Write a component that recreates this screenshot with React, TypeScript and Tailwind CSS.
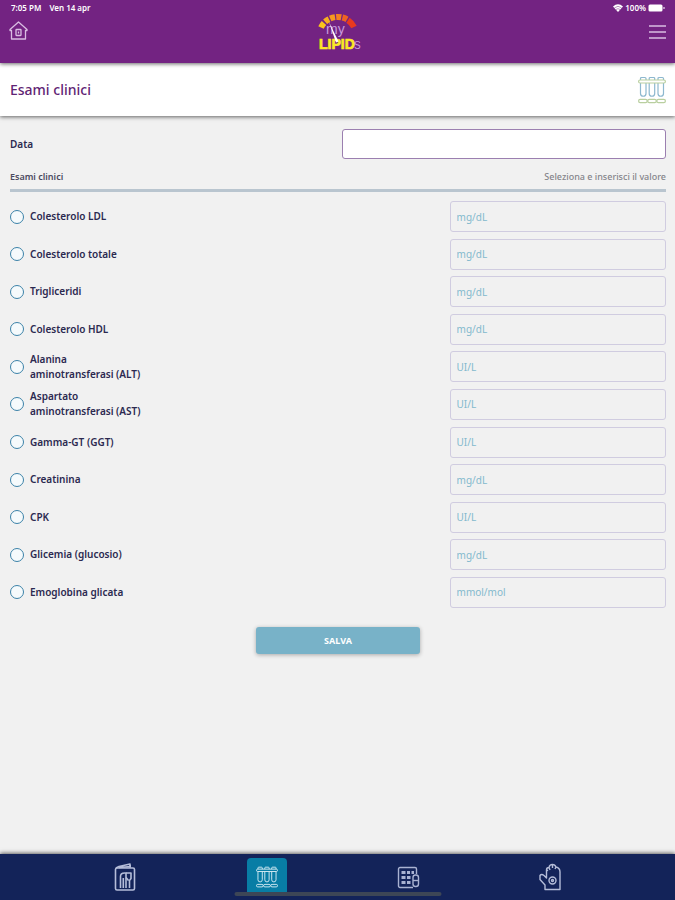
import type { ReactNode } from "react";

const exams = [
    { id: "ldl", label: "Colesterolo LDL", unit: "mg/dL" },
    { id: "totale", label: "Colesterolo totale", unit: "mg/dL" },
    { id: "trigliceridi", label: "Trigliceridi", unit: "mg/dL" },
    { id: "hdl", label: "Colesterolo HDL", unit: "mg/dL" },
    { id: "alt", label: "Alanina aminotransferasi (ALT)", unit: "UI/L" },
    { id: "ast", label: "Aspartato aminotransferasi (AST)", unit: "UI/L" },
    { id: "ggt", label: "Gamma-GT (GGT)", unit: "UI/L" },
    { id: "creatinina", label: "Creatinina", unit: "mg/dL" },
    { id: "cpk", label: "CPK", unit: "UI/L" },
    { id: "glicemia", label: "Glicemia (glucosio)", unit: "mg/dL" },
    { id: "emoglobina", label: "Emoglobina glicata", unit: "mmol/mol" },
];

function Logo() {
    return (
        <svg width="46" height="42" viewBox="0 0 46 42" role="img" aria-label="my LIPIDS">
            <g fill="none" strokeWidth="6">
                <path d="M6 15.500A18 18 0 0 1 9 11" stroke="#f9c51c" />
                <path d="M10.100 9.800A18 18 0 0 1 14 7.200" stroke="#f7b01f" />
                <path d="M15.200 6.500A18 18 0 0 1 20 5.100" stroke="#f59a1f" />
                <path d="M21.200 5A18 18 0 0 1 26.200 5.200" stroke="#f3801f" />
                <path d="M27.400 5.500A18 18 0 0 1 32 7.300" stroke="#ef6320" />
                <path d="M33 8.200A18 18 0 0 1 39 15" stroke="#e8391f" />
            </g>
            <text x="11" y="22" fontSize="14" fill="#c79bdc" fontFamily="Liberation Sans, sans-serif">my</text>
            <text x="4" y="37" fontSize="14" fontWeight="700" fill="#fbe926" stroke="#fbe926" strokeWidth="0.700" fontFamily="Liberation Sans, sans-serif">LIPID</text>
            <text x="39" y="37" fontSize="10" fill="#c79bdc" fontFamily="Liberation Sans, sans-serif">S</text>
            <path d="M14 10 23.500 29.500 21 30.500Z" fill="#fff" />
        </svg>
    );
}

function HomeIcon() {
    return (
        <svg width="19" height="20" viewBox="0 0 19 20" fill="none" stroke="#d9bde2" strokeWidth="1.300" strokeLinejoin="round">
            <path d="M1 8.500 9.500 1 18 8.500V9.500H16.500V18H2.500V9.500H1Z" />
            <rect x="7" y="8.500" width="5" height="6" rx="0.500" />
            <path d="M9.500 10.500V12.500" />
        </svg>
    );
}

function TubesIcon({ size, tube, rack }: { size: number; tube: string; rack: string }) {
    return (
        <svg width={size} height={size} viewBox="0 0 28 28" fill="none" strokeWidth="1.200">
            <g stroke={tube}>
                <path d="M2.500 4V2.500A1 1 0 0 1 3.500 1.500H7A1 1 0 0 1 8 2.500V4M2.500 7V17.500A2.700 2.700 0 0 0 8 17.500V7" />
                <path d="M11.200 4V2.500A1 1 0 0 1 12.200 1.500H15.700A1 1 0 0 1 16.700 2.500V4M11.200 7V17.500A2.700 2.700 0 0 0 16.700 17.500V7" />
                <path d="M20 4V2.500A1 1 0 0 1 21 1.500H24.500A1 1 0 0 1 25.500 2.500V4M20 7V17.500A2.700 2.700 0 0 0 25.500 17.500V7" />
            </g>
            <g stroke={rack}>
                <rect x="0.600" y="4" width="26.800" height="3" rx="1.500" />
                <rect x="0.600" y="23.400" width="8.600" height="3.200" rx="1.600" />
                <rect x="9.700" y="23.400" width="8.600" height="3.200" rx="1.600" />
                <rect x="18.800" y="23.400" width="8.600" height="3.200" rx="1.600" />
            </g>
        </svg>
    );
}

function BookletIcon() {
    return (
        <svg width="22" height="28" viewBox="0 0 22 28" fill="none" stroke="#b5bdd9" strokeWidth="1.600" strokeLinejoin="round">
            <rect x="1.500" y="5" width="19" height="22" rx="1.500" />
            <path d="M2 5 5 3.500 16 1V5M5 4.500 17 3.500" />
            <path d="M6.500 25V13.500Q6.500 10 10.500 10H12V25M9.300 25V15" />
            <path d="M12 10H17V15.500L15.500 17.500V25M12 14.500 14.500 17.500" />
        </svg>
    );
}

function PillsIcon() {
    return (
        <svg width="23" height="23" viewBox="0 0 23 23" fill="none" stroke="#a9b2d2" strokeWidth="1.400">
            <path d="M16 21.500H3A1.500 1.500 0 0 1 1.500 20V3A1.500 1.500 0 0 1 3 1.500H18A1.500 1.500 0 0 1 19.500 3V8" />
            <path d="M4.500 6.500H8.500M10 6.500H13M14.500 6.500H17M4.500 11.500H8.500M10 11.500H13.500M4.500 16.500H8.500M10 16.500H13.500" strokeWidth="2.800" />
            <rect x="16" y="9" width="5.500" height="11.500" rx="2.500" />
            <path d="M16 14.500H21.500" />
        </svg>
    );
}

function GloveIcon() {
    return (
        <svg width="24" height="28" viewBox="0 0 24 28" fill="none" stroke="#b5bdd9" strokeWidth="1.400" strokeLinejoin="round">
            <path d="M7 26.500V22L2 16.500V12.500Q3.500 10.500 6 12.500L8.500 15V7Q8.500 4.500 11 4.500Q11.500 1.500 14.500 1.500Q17 1.500 18 4Q22 5 22 9V26.500Z" />
            <path d="M8.500 8 10 7M11 4.500 12 7M14.500 1.500V5M18 4 17 6" />
            <circle cx="14.500" cy="17.500" r="3.500" />
            <circle cx="14.500" cy="17.500" r="1" />
        </svg>
    );
}

function NavItem({ label, active = false, children }: { label: string; active?: boolean; children: ReactNode }) {
    return (
        <a
            href="#"
            aria-label={label}
            aria-current={active ? "page" : undefined}
            className={`flex h-[38px] w-10 items-center justify-center rounded-sm ${active ? "bg-[#087da5]" : ""}`}
        >
            {children}
        </a>
    );
}

function ExamRow({ id, label, unit }: { id: string; label: string; unit: string }) {
    return (
        <li className="flex items-center justify-between">
            <div className="flex items-center gap-1.5">
                <input
                    type="checkbox"
                    id={id}
                    className="h-3.5 w-3.5 shrink-0 appearance-none rounded-full border border-[#3b82a8] bg-[#f5fafc] checked:bg-[#087da5]"
                />
                <label htmlFor={id} className="max-w-[120px] text-[10px] leading-[15px] font-semibold text-[#2b2950]">
                    {label}
                </label>
            </div>
            <input
                type="text"
                aria-label={`${label} (${unit})`}
                placeholder={unit}
                className="h-[31px] w-[33%] rounded-[3px] border border-[#d0cce0] bg-transparent px-1.5 text-[10px] text-[#2b2950] placeholder:text-[#83b9cd]"
            />
        </li>
    );
}

export default function App() {
    return (
        <div className="flex min-h-screen flex-col bg-[#f1f1f1] font-['Noto_Sans',sans-serif]">
            <header className="relative z-20 h-[63px] bg-[#732382] shadow-[0_1px_4px_rgba(0,0,0,0.6)]">
                <div className="flex h-4 items-center justify-between pr-2.5 pl-[11px] text-[8px] font-semibold text-white">
                    <div className="flex gap-2">
                        <span>7:05 PM</span>
                        <span>Ven 14 apr</span>
                    </div>
                    <div className="flex items-center gap-0.5">
                        <svg width="10" height="8" viewBox="0 0 10 8" fill="#fff" aria-hidden="true">
                            <path d="M0 2.500Q5-2 10 2.500L5 8Z" />
                            <path d="M1.500 3.800Q5 .8 8.500 3.800M3 5.500Q5 3.800 7 5.500" fill="none" stroke="#732382" strokeWidth=".5" />
                        </svg>
                        <span>100%</span>
                        <svg width="17" height="8" viewBox="0 0 17 8" fill="#fff" aria-hidden="true">
                            <rect x="0.500" y="0.500" width="14" height="7" rx="1.500" />
                            <path d="M15.500 3H16.500V5H15.500Z" />
                        </svg>
                    </div>
                </div>
                <div className="grid grid-cols-3 items-start px-[9px]">
                    <a href="#" aria-label="Home" className="justify-self-start pt-[5px]">
                        <HomeIcon />
                    </a>
                    <div className="-mt-1 justify-self-center">
                        <Logo />
                    </div>
                    <button type="button" aria-label="Menu" className="justify-self-end pt-2">
                        <svg width="17" height="16" viewBox="0 0 17 16" stroke="#d9bde2" strokeWidth="1.500">
                            <path d="M0 2H17M0 8H17M0 14H17" />
                        </svg>
                    </button>
                </div>
            </header>

            <div className="relative z-10 flex h-[53px] items-center justify-between bg-white pr-[9px] pl-2.5 shadow-[0_1px_4px_rgba(0,0,0,0.6)]">
                <h1 className="text-sm font-medium text-[#5f2474]">Esami clinici</h1>
                <TubesIcon size={28} tube="#8db8cf" rack="#b9cf9f" />
            </div>

            <main className="flex-1 pr-[9px] pl-2.5">
                <form onSubmit={(e) => e.preventDefault()}>
                    <div className="mt-[13px] grid grid-cols-2 items-center gap-2">
                        <label htmlFor="data" className="text-[10px] font-semibold text-[#2b2950]">
                            Data
                        </label>
                        <input
                            type="text"
                            id="data"
                            className="h-[30px] w-full rounded-[3px] border border-[#9b7fb0] bg-white px-2 text-[10px]"
                        />
                    </div>
                    <div className="mt-2.5 flex items-center justify-between border-b-[3px] border-[#b9c5cf] pb-1 text-[9px] leading-4">
                        <h2 className="font-semibold text-[#4b4a60]">Esami clinici</h2>
                        <p className="font-medium text-[#85858b]">Seleziona e inserisci il valore</p>
                    </div>
                    <ul className="mt-1.5 grid min-h-[413px] auto-rows-fr">
                        {exams.map((exam) => (
                            <ExamRow key={exam.id} {...exam} />
                        ))}
                    </ul>
                    <button
                        type="submit"
                        className="mx-auto mt-4 block h-[27px] w-1/4 rounded-[3px] bg-[#78b2c8] text-[9px] font-bold text-white shadow-[0_1px_4px_rgba(0,0,0,0.3)]"
                    >
                        SALVA
                    </button>
                </form>
            </main>

            <nav className="relative grid h-[46px] grid-cols-4 items-center justify-items-center bg-[#132359] px-[54px] shadow-[0_-1px_4px_rgba(0,0,0,0.6)]">
                <NavItem label="Diario">
                    <BookletIcon />
                </NavItem>
                <NavItem label="Esami clinici" active>
                    <TubesIcon size={22} tube="#d5ebf3" rack="#d5ebf3" />
                </NavItem>
                <NavItem label="Terapia">
                    <PillsIcon />
                </NavItem>
                <NavItem label="Glicemia">
                    <GloveIcon />
                </NavItem>
                <div className="absolute bottom-1 left-1/2 h-1 w-[207px] -translate-x-1/2 rounded-full bg-[#3d4656]" />
            </nav>
        </div>
    );
}
